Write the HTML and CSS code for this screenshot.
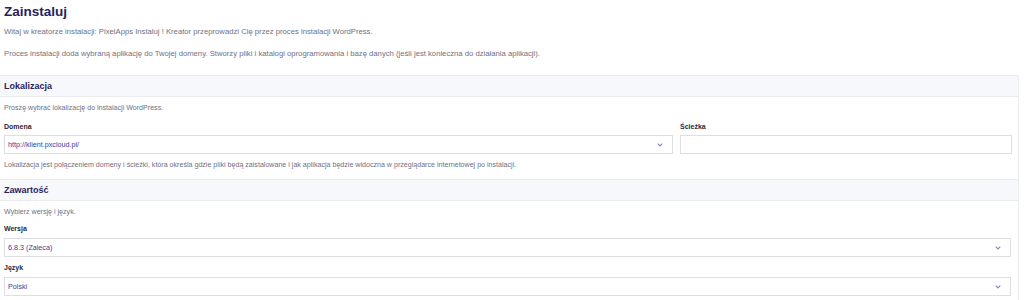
FILE: index.html
```html
<!DOCTYPE html>
<html lang="pl">
<head>
<meta charset="utf-8">
<title>Zainstaluj</title>
<link rel="stylesheet" href="styles.css">
</head>
<body>
<div class="page">
  <h1 class="title">Zainstaluj</h1>
  <p class="intro">Witaj w kreatorze instalacji: PixelApps Instaluj ! Kreator przeprowadzi Cię przez proces instalacji WordPress.</p>
  <p class="intro intro-2">Proces instalacji doda wybraną aplikację do Twojej domeny. Stworzy pliki i katalogi oprogramowania i bazę danych (jeśli jest konieczna do działania aplikacji).</p>

  <section class="panel panel-loc">
    <div class="panel-head">Lokalizacja</div>
    <div class="panel-body">
      <p class="hint">Proszę wybrać lokalizację do instalacji WordPress.</p>
      <div class="row">
        <div class="field field-domain">
          <label class="label">Domena</label>
          <div class="select">
            <span class="value">http://klient.pxcloud.pl/</span>
            <svg class="chev" viewBox="0 0 6 4" width="6" height="4"><path d="M0.7 0.7l2.3 2.3 2.3-2.3" fill="none" stroke="currentColor" stroke-width="1.1"/></svg>
          </div>
        </div>
        <div class="field field-path">
          <label class="label">Ścieżka</label>
          <div class="input"></div>
        </div>
      </div>
      <p class="hint help">Lokalizacja jest połączeniem domeny i ścieżki, która określa gdzie pliki będą zaistalowane i jak aplikacja będzie widoczna w przeglądarce internetowej po instalacji.</p>
    </div>
  </section>

  <section class="panel panel-content">
    <div class="panel-head">Zawartość</div>
    <div class="panel-body">
      <p class="hint">Wybierz wersję i język.</p>
      <div class="field field-full">
        <label class="label">Wersja</label>
        <div class="select">
          <span class="value">6.8.3 (Zaleca)</span>
          <svg class="chev" viewBox="0 0 6 4" width="6" height="4"><path d="M0.7 0.7l2.3 2.3 2.3-2.3" fill="none" stroke="currentColor" stroke-width="1.1"/></svg>
        </div>
      </div>
      <div class="field field-full">
        <label class="label">Język</label>
        <div class="select">
          <span class="value">Polski</span>
          <svg class="chev" viewBox="0 0 6 4" width="6" height="4"><path d="M0.7 0.7l2.3 2.3 2.3-2.3" fill="none" stroke="currentColor" stroke-width="1.1"/></svg>
        </div>
      </div>
    </div>
  </section>
</div>
</body>
</html>
```
FILE: styles.css
```css
* { box-sizing: border-box; }
html, body { margin: 0; padding: 0; background: #fff; }
body {
  font-family: "Liberation Sans", Arial, sans-serif;
  color: #717082;
  font-size: 8px;
}
.page { width: 1019px; }
.title {
  margin: 3px 0 0 4px;
  font-size: 13.5px;
  line-height: 18px;
  font-weight: bold;
  color: #27235f;
}
.intro {
  margin: 5px 0 0 4px;
  line-height: 12px;
  font-size: 7.7px;
}
.intro-2 { margin-top: 10px; }

.panel {
  border-right: 1px solid #ececf0;
}
.panel-loc { margin-top: 15px; }
.panel-head {
  height: 22px;
  line-height: 20px;
  padding-left: 4px;
  background: #f7f8fb;
  border-top: 1px solid #ebecf0;
  border-bottom: 1px solid #ebecf0;
  font-weight: bold;
  font-size: 9px;
  color: #27235f;
}
.panel-body { padding: 5px 6px 8px 4px; }
.hint { margin: 0; line-height: 12px; font-size: 7.1px; }
.help { margin-top: 5px; }

.row { display: flex; gap: 7px; margin-top: 7px; }
.field-domain { width: 669px; }
.field-path { flex: 1; }
.label {
  display: block;
  line-height: 12px;
  font-weight: bold;
  font-size: 7px;
  color: #2a2a3a;
  margin-bottom: 2px;
}
.select, .input {
  height: 19px;
  border: 1px solid #dedfe4;
  background: #fff;
  display: flex;
  align-items: center;
  justify-content: space-between;
  padding: 0 9px 0 3px;
}
.value { color: #3e3a9a; font-size: 7.2px; }
.chev { color: #8a84c8; }

.field-full { margin-top: 5px; margin-right: 1px; }
.field-full .label { margin-bottom: 3px; }
```
